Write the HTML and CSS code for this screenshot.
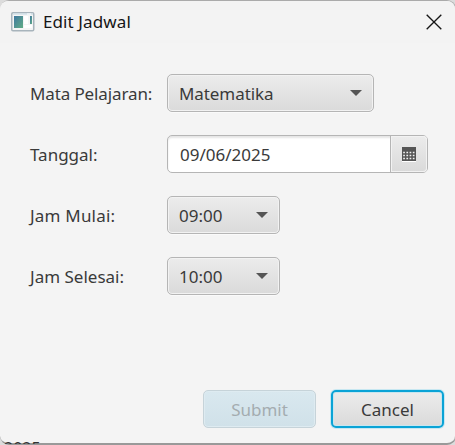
FILE: index.html
```html
<!DOCTYPE html>
<html lang="id">
<head>
<meta charset="utf-8">
<title>Edit Jadwal</title>
<link rel="stylesheet" href="styles.css">
</head>
<body>
<main class="dialog">
  <header class="titlebar">
    <svg class="app-icon" width="24" height="20" viewBox="0 0 24 20">
      <defs><linearGradient id="pane" x1="0" y1="0" x2="1" y2="1"><stop offset="0" stop-color="#3f78a0"/><stop offset="1" stop-color="#62ad86"/></linearGradient></defs>
      <rect x=".75" y=".75" width="22" height="18" rx="1.2" fill="#f5f5f5" stroke="#a8b4bc" stroke-width="1.5"/>
      <path d="M2 2h20" stroke="#d1e0e9" stroke-width="1.5"/>
      <path d="M16 2h4" stroke="#fff"/>
      <rect x="3" y="4" width="9" height="12" fill="url(#pane)"/>
      <path d="M13 4h4v8h-4zM13 13h8v3h-8z" fill="#fff"/>
      <path d="M19 4h2v8h-2z" fill="url(#pane)"/>
    </svg>
    <h1 class="title">Edit Jadwal</h1>
    <svg class="close" width="16" height="16" viewBox="0 0 16 16"><path d="M.7.7 15.3 15.3M15.3.7.7 15.3" stroke="#161616" stroke-width="1.35"/></svg>
  </header>
  <form class="form">
    <label class="label subject">Mata Pelajaran:</label>
    <div class="control combo wide"><span class="subject-value">Matematika</span><i class="arrow"></i></div>
    <label class="label date">Tanggal:</label>
    <div class="control picker"><span class="date-value">09/06/2025</span><div class="calendar">
      <svg width="14" height="15" viewBox="0 0 14 15"><path d="M0 14.5h14" stroke="#fff"/><path d="M0 0h14v14H0z" fill="#555"/><path d="M1.2 5.5h12M1.2 8.5h12M1.2 11.5h12" stroke="#f2f2f2" stroke-width="1.7" stroke-dasharray="1.7 1.5"/></svg>
    </div></div>
    <label class="label start">Jam Mulai:</label>
    <div class="control combo"><span class="time">09:00</span><i class="arrow"></i></div>
    <label class="label end">Jam Selesai:</label>
    <div class="control combo"><span class="time">10:00</span><i class="arrow"></i></div>
  </form>
  <footer class="actions">
    <div class="button submit"><span>Submit</span></div>
    <div class="button cancel"><span>Cancel</span></div>
  </footer>
</main>
<div class="backdrop-text">2025</div>
</body>
</html>
```
FILE: styles.css
```css
* { box-sizing: border-box; }
body {
  margin: 0;
  width: 455px;
  height: 445px;
  overflow: hidden;
  background: #dcdcdc;
  color: #3a3a3a;
  font: 17px/24px "Noto Sans", "Open Sans", sans-serif;
}
.dialog {
  width: 456px;
  height: 445px;
  border: 1px solid #aaa;
  border-width: 1px 1px 2px 0;
  border-bottom-color: #999;
  border-radius: 9px;
  background: #f4f4f4;
}
.titlebar {
  height: 42px;
  padding: 0 13px 1px 11px;
  display: flex;
  align-items: center;
  background: #f3f3f3;
  border-radius: 8px 8px 0 0;
}
.title {
  margin: 0 auto 0 8px;
  color: #161616;
  font-size: 17px;
  font-weight: 400;
  letter-spacing: .1px;
}
.form {
  height: 347px;
  padding: 31px 0 0 30px;
  display: grid;
  grid-template-columns: 137px 261px;
  grid-auto-rows: 38px;
  row-gap: 23px;
  align-content: start;
}
.label { align-self: center; padding-top: 2px; white-space: nowrap; }
.subject { letter-spacing: -.12px; }
.subject-value { letter-spacing: -.08px; }
.start { letter-spacing: .2px; }
.control, .button {
  height: 38px;
  display: flex;
  align-items: center;
  border: 1px solid #b5b5b5;
  border-radius: 5px;
  background: linear-gradient(#ececec, #dadada);
  box-shadow: inset 0 0 0 1px #f2f2f2, 0 1px #fafafa;
}
.control > span, .button > span { padding-top: 2px; }
.combo { width: 113px; padding: 1px 11px; justify-content: space-between; }
.wide { width: 207px; }
.arrow { border: 6px solid transparent; border-top-color: #555; border-bottom: 0; margin-bottom: 1px; }
.picker { width: 261px; padding-left: 12px; background: #fff; box-shadow: inset 0 2px 2px #e5e5e5; justify-content: space-between; }
.calendar {
  width: 37px;
  height: 36px;
  display: grid;
  place-items: center;
  border-left: 1px solid #b5b5b5;
  border-radius: 0 4px 4px 0;
  background: linear-gradient(#ececec, #dadada);
  box-shadow: inset 0 0 0 1px #f2f2f2;
}
.actions { display: flex; justify-content: flex-end; gap: 15px; padding-right: 11px; }
.button { width: 113px; justify-content: center; }
.submit {
  color: #a4acb0;
  border-color: #c6d3d9;
  background: linear-gradient(#d9e8ef, #d0e1e9);
  box-shadow: inset 0 0 0 1px #deebf1;
}
.cancel {
  border: 2px solid #0aa3d6;
  box-shadow: 0 0 0 1px #c7e7f1, inset 0 0 0 1px #c8e6ef;
}
.backdrop-text {
  position: absolute;
  left: 4px;
  top: 442px;
  height: 2px;
  overflow: hidden;
  color: #333;
  font-size: 16px;
  line-height: 13px;
}
```
